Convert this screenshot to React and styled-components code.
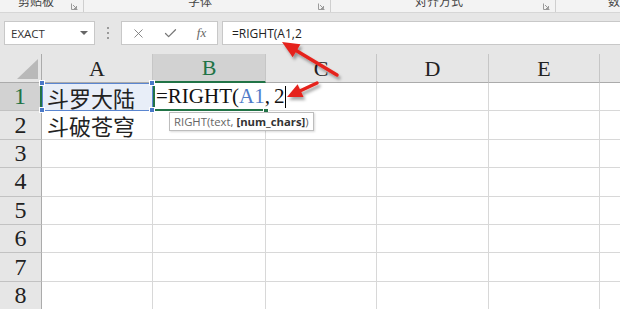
import React from "react";
import styled, { createGlobalStyle } from "styled-components";
import { X, Check } from "lucide-react";

const Global = createGlobalStyle`
  html, body { margin: 0; padding: 0; background: #fff; overflow: hidden; }
  #root { width: 620px; height: 309px; }
`;

const Page = styled.div`
  position: relative;
  width: 620px;
  height: 309px;
  overflow: hidden;
  display: flex;
  flex-direction: column;
  font-family: "Open Sans", "Noto Sans", sans-serif;
`;

/* ribbon strip (group titles, cut at the top) */
const Ribbon = styled.div`
  height: 12px;
  flex: none;
  display: flex;
  background: #f3f3f3;
  border-bottom: 1px solid #d6d6d6;
  overflow: hidden;
`;

const Group = styled.div`
  flex: none;
  width: ${(p) => p.$w}px;
  box-sizing: border-box;
  display: flex;
  align-items: flex-start;
  padding-left: ${(p) => p.$pad}px;
  border-right: ${(p) => (p.$last ? "none" : "1px solid #cfcfcf")};
`;

const GroupTitle = styled.span`
  margin-top: -7px;
  line-height: 16px;
  font-size: 12px;
  color: #444;
  font-family: "Noto Sans CJK SC", sans-serif;
  white-space: nowrap;
`;

const Launcher = styled.svg`
  margin-left: auto;
  margin-right: 5px;
  margin-top: 3px;
  flex: none;
`;

/* formula bar */
const FormulaBar = styled.div`
  height: 41px;
  flex: none;
  box-sizing: border-box;
  display: flex;
  align-items: flex-start;
  padding: 8px 0 0 4px;
  background: #e6e6e6;
`;

const NameBox = styled.div`
  width: 91px;
  height: 24px;
  box-sizing: border-box;
  background: #fff;
  border: 1px solid #c8c8c8;
  display: flex;
  align-items: center;
  justify-content: space-between;
  padding: 0 6px 0 6px;
  font-size: 11.5px;
  color: #333;
`;

const Caret = styled.span`
  width: 0;
  height: 0;
  border-left: 4px solid transparent;
  border-right: 4px solid transparent;
  border-top: 4px solid #666;
`;

const Dots = styled.div`
  width: 26px;
  height: 24px;
  display: flex;
  flex-direction: column;
  align-items: center;
  justify-content: center;
  gap: 3px;
  & > span {
    width: 2px;
    height: 2px;
    background: #9a9a9a;
  }
`;

const ButtonBox = styled.div`
  width: 97px;
  height: 24px;
  box-sizing: border-box;
  background: #fff;
  border: 1px solid #c8c8c8;
  display: grid;
  grid-template-columns: 32px 32px 31px;
  align-items: center;
  justify-items: center;
  color: #777;
`;

const Fx = styled.span`
  font-family: "Liberation Serif", serif;
  font-style: italic;
  font-size: 13px;
  color: #666;
`;

const FormulaInput = styled.div`
  flex: 1;
  margin-left: 4px;
  height: 24px;
  box-sizing: border-box;
  background: #fff;
  border: 1px solid #c8c8c8;
  border-right: none;
  display: flex;
  align-items: center;
  padding-left: 9px;
  font-size: 12px;
  color: #222;
`;

/* sheet */
const SheetWrap = styled.div`
  position: relative;
  flex: 1;
`;

const Sheet = styled.div`
  display: grid;
  grid-template-columns: 42px 111px 113px 111px 112px 111px 112px;
  grid-template-rows: 29px repeat(8, 28.4px);
`;

const Corner = styled.div`
  background: #e6e6e6;
  border-right: 1px solid #ababab;
  border-bottom: 1px solid #ababab;
  box-sizing: border-box;
  display: flex;
  align-items: flex-end;
  justify-content: flex-end;
  padding: 0 3px 3px 0;
`;

const Triangle = styled.span`
  width: 0;
  height: 0;
  border-left: 21px solid transparent;
  border-bottom: 20px solid #b9b9b9;
`;

const ColHead = styled.div`
  background: ${(p) => (p.$active ? "#d2d2d2" : "#e6e6e6")};
  color: ${(p) => (p.$active ? "#217346" : "#222")};
  border-right: 1px solid #c6c6c6;
  border-bottom: ${(p) => (p.$active ? "2px solid #217346" : "1px solid #ababab")};
  box-sizing: border-box;
  display: flex;
  align-items: center;
  justify-content: center;
  padding-top: 1px;
  font-family: "Liberation Serif", serif;
  font-size: 22px;
`;

const RowHead = styled.div`
  background: ${(p) => (p.$active ? "#d2d2d2" : "#e6e6e6")};
  color: ${(p) => (p.$active ? "#217346" : "#222")};
  border-right: ${(p) => (p.$active ? "2px solid #217346" : "1px solid #ababab")};
  border-bottom: 1px solid #c2c2c2;
  box-sizing: border-box;
  display: flex;
  align-items: center;
  justify-content: center;
  font-family: "Liberation Serif", serif;
  font-size: 24px;
`;

const Cell = styled.div`
  position: relative;
  border-right: 1px solid #d8d8d8;
  border-bottom: 1px solid #d8d8d8;
  box-sizing: border-box;
  display: flex;
  align-items: center;
  padding-left: 5px;
  font-family: "Noto Sans CJK SC", sans-serif;
  font-size: 22px;
  color: #222;
  white-space: nowrap;
  background: ${(p) => (p.$ref ? "#e8eef8" : "#fff")};
  ${(p) => p.$ref && "outline: 1px solid #5b86d0; outline-offset: -1px;"}
`;

const Handle = styled.span`
  position: absolute;
  width: 4px;
  height: 4px;
  background: ${(p) => p.$color};
  border: 1px solid #fff;
  ${(p) => (p.$top ? "top: -3px;" : "bottom: -3px;")}
  ${(p) => (p.$left ? "left: -3px;" : "right: -3px;")}
  z-index: 4;
`;

const EditCell = styled.div`
  position: relative;
  z-index: 2;
  border-bottom: 1px solid #d8d8d8;
  box-sizing: border-box;
  display: flex;
  align-items: center;
  overflow: visible;
  &::after {
    content: "";
    position: absolute;
    inset: 0 0 -1px 0;
    border-left: 2px solid #217346;
    border-bottom: 2px solid #217346;
    pointer-events: none;
  }
`;

const EditText = styled.span`
  position: relative;
  height: 26px;
  display: flex;
  align-items: center;
  padding: 0 2px 0 3px;
  background: #fff;
  font-family: "Liberation Serif", serif;
  font-size: 21px;
  color: #111;
  white-space: nowrap;
`;

const Ref = styled.span`
  color: #4f7bc9;
`;

const Gap = styled.span`
  width: 4px;
`;

const Cursor = styled.span`
  width: 1px;
  height: 22px;
  background: #000;
  margin-left: 1px;
`;

const Tooltip = styled.div`
  position: absolute;
  left: 169px;
  top: 58px;
  z-index: 5;
  height: 19px;
  box-sizing: border-box;
  padding: 0 4px;
  display: flex;
  align-items: center;
  background: #fff;
  border: 1px solid #bdbdbd;
  box-shadow: 1px 1px 2px rgba(0, 0, 0, 0.15);
  font-size: 11.3px;
  color: #666;
  white-space: nowrap;
  & b {
    color: #333;
  }
`;

const Arrows = styled.svg`
  position: absolute;
  left: 0;
  top: 0;
  z-index: 10;
  pointer-events: none;
`;

const cols = ["A", "B", "C", "D", "E", "F"];
const data = {
  1: ["斗罗大陆"],
  2: ["斗破苍穹"],
};

function LauncherIcon() {
  return (
    <Launcher width="7" height="7" viewBox="0 0 7 7">
      <path d="M0.5 0.5V6.5H6.5" fill="none" stroke="#9a9a9a" strokeWidth="1" />
      <path d="M2 2L5.5 5.5M5.5 3V5.5H3" fill="none" stroke="#9a9a9a" strokeWidth="1" />
    </Launcher>
  );
}

function Arrow({ tail, tip, len, half }) {
  const dx = tip[0] - tail[0];
  const dy = tip[1] - tail[1];
  const d = Math.hypot(dx, dy);
  const ux = dx / d;
  const uy = dy / d;
  const bx = tip[0] - ux * len;
  const by = tip[1] - uy * len;
  const nx = -uy;
  const ny = ux;
  const pts = `${tip[0]},${tip[1]} ${bx + nx * half},${by + ny * half} ${bx - nx * half},${by - ny * half}`;
  return (
    <g>
      <line x1={tail[0]} y1={tail[1]} x2={bx + ux * 2} y2={by + uy * 2} stroke="#e5231b" strokeWidth="3.5" strokeLinecap="round" />
      <polygon points={pts} fill="#e5231b" />
    </g>
  );
}

export default function App() {
  const rows = [1, 2, 3, 4, 5, 6, 7, 8];
  return (
    <Page>
      <Global />
      <Ribbon>
        <Group $w={84} $pad={18}>
          <GroupTitle>剪贴板</GroupTitle>
          <LauncherIcon />
        </Group>
        <Group $w={247} $pad={104}>
          <GroupTitle>字体</GroupTitle>
          <LauncherIcon />
        </Group>
        <Group $w={225} $pad={84}>
          <GroupTitle>对齐方式</GroupTitle>
          <LauncherIcon />
        </Group>
        <Group $w={64} $pad={52} $last>
          <GroupTitle>数字</GroupTitle>
        </Group>
      </Ribbon>

      <FormulaBar>
        <NameBox>
          EXACT
          <Caret />
        </NameBox>
        <Dots>
          <span />
          <span />
          <span />
        </Dots>
        <ButtonBox>
          <X size={15} strokeWidth={1.4} />
          <Check size={15} strokeWidth={2} />
          <Fx>fx</Fx>
        </ButtonBox>
        <FormulaInput>=RIGHT(A1,2</FormulaInput>
      </FormulaBar>

      <SheetWrap>
        <Sheet>
          <Corner>
            <Triangle />
          </Corner>
          {cols.map((c) => (
            <ColHead key={c} $active={c === "B"}>
              {c}
            </ColHead>
          ))}
          {rows.map((r) => (
            <React.Fragment key={r}>
              <RowHead $active={r === 1}>{r}</RowHead>
              {cols.map((c, i) => {
                if (r === 1 && c === "B") {
                  return (
                    <EditCell key={c}>
                      <EditText>
                        =RIGHT(<Ref>A1</Ref>,<Gap />2
                        <Cursor />
                      </EditText>
                      <Handle $color="#217346" style={{ right: "-3px", bottom: "-4px" }} />
                    </EditCell>
                  );
                }
                const ref = r === 1 && c === "A";
                return (
                  <Cell key={c} $ref={ref}>
                    {data[r] && data[r][i]}
                    {ref && (
                      <>
                        <Handle $color="#4a78c8" $top $left />
                        <Handle $color="#4a78c8" $top />
                        <Handle $color="#4a78c8" $left />
                        <Handle $color="#4a78c8" />
                      </>
                    )}
                  </Cell>
                );
              })}
            </React.Fragment>
          ))}
        </Sheet>
        <Tooltip>
          RIGHT(text,&nbsp;<b>[num_chars]</b>)
        </Tooltip>
      </SheetWrap>

      <Arrows width="620" height="309" viewBox="0 0 620 309">
        <defs>
          <filter id="sh" x="-20%" y="-20%" width="140%" height="140%">
            <feDropShadow dx="2" dy="3" stdDeviation="1.6" floodColor="#000" floodOpacity="0.35" />
          </filter>
        </defs>
        <g filter="url(#sh)">
          <Arrow tail={[337, 75]} tip={[282, 42]} len={17} half={7.5} />
          <Arrow tail={[317, 83]} tip={[287, 97]} len={15} half={7} />
        </g>
      </Arrows>
    </Page>
  );
}
